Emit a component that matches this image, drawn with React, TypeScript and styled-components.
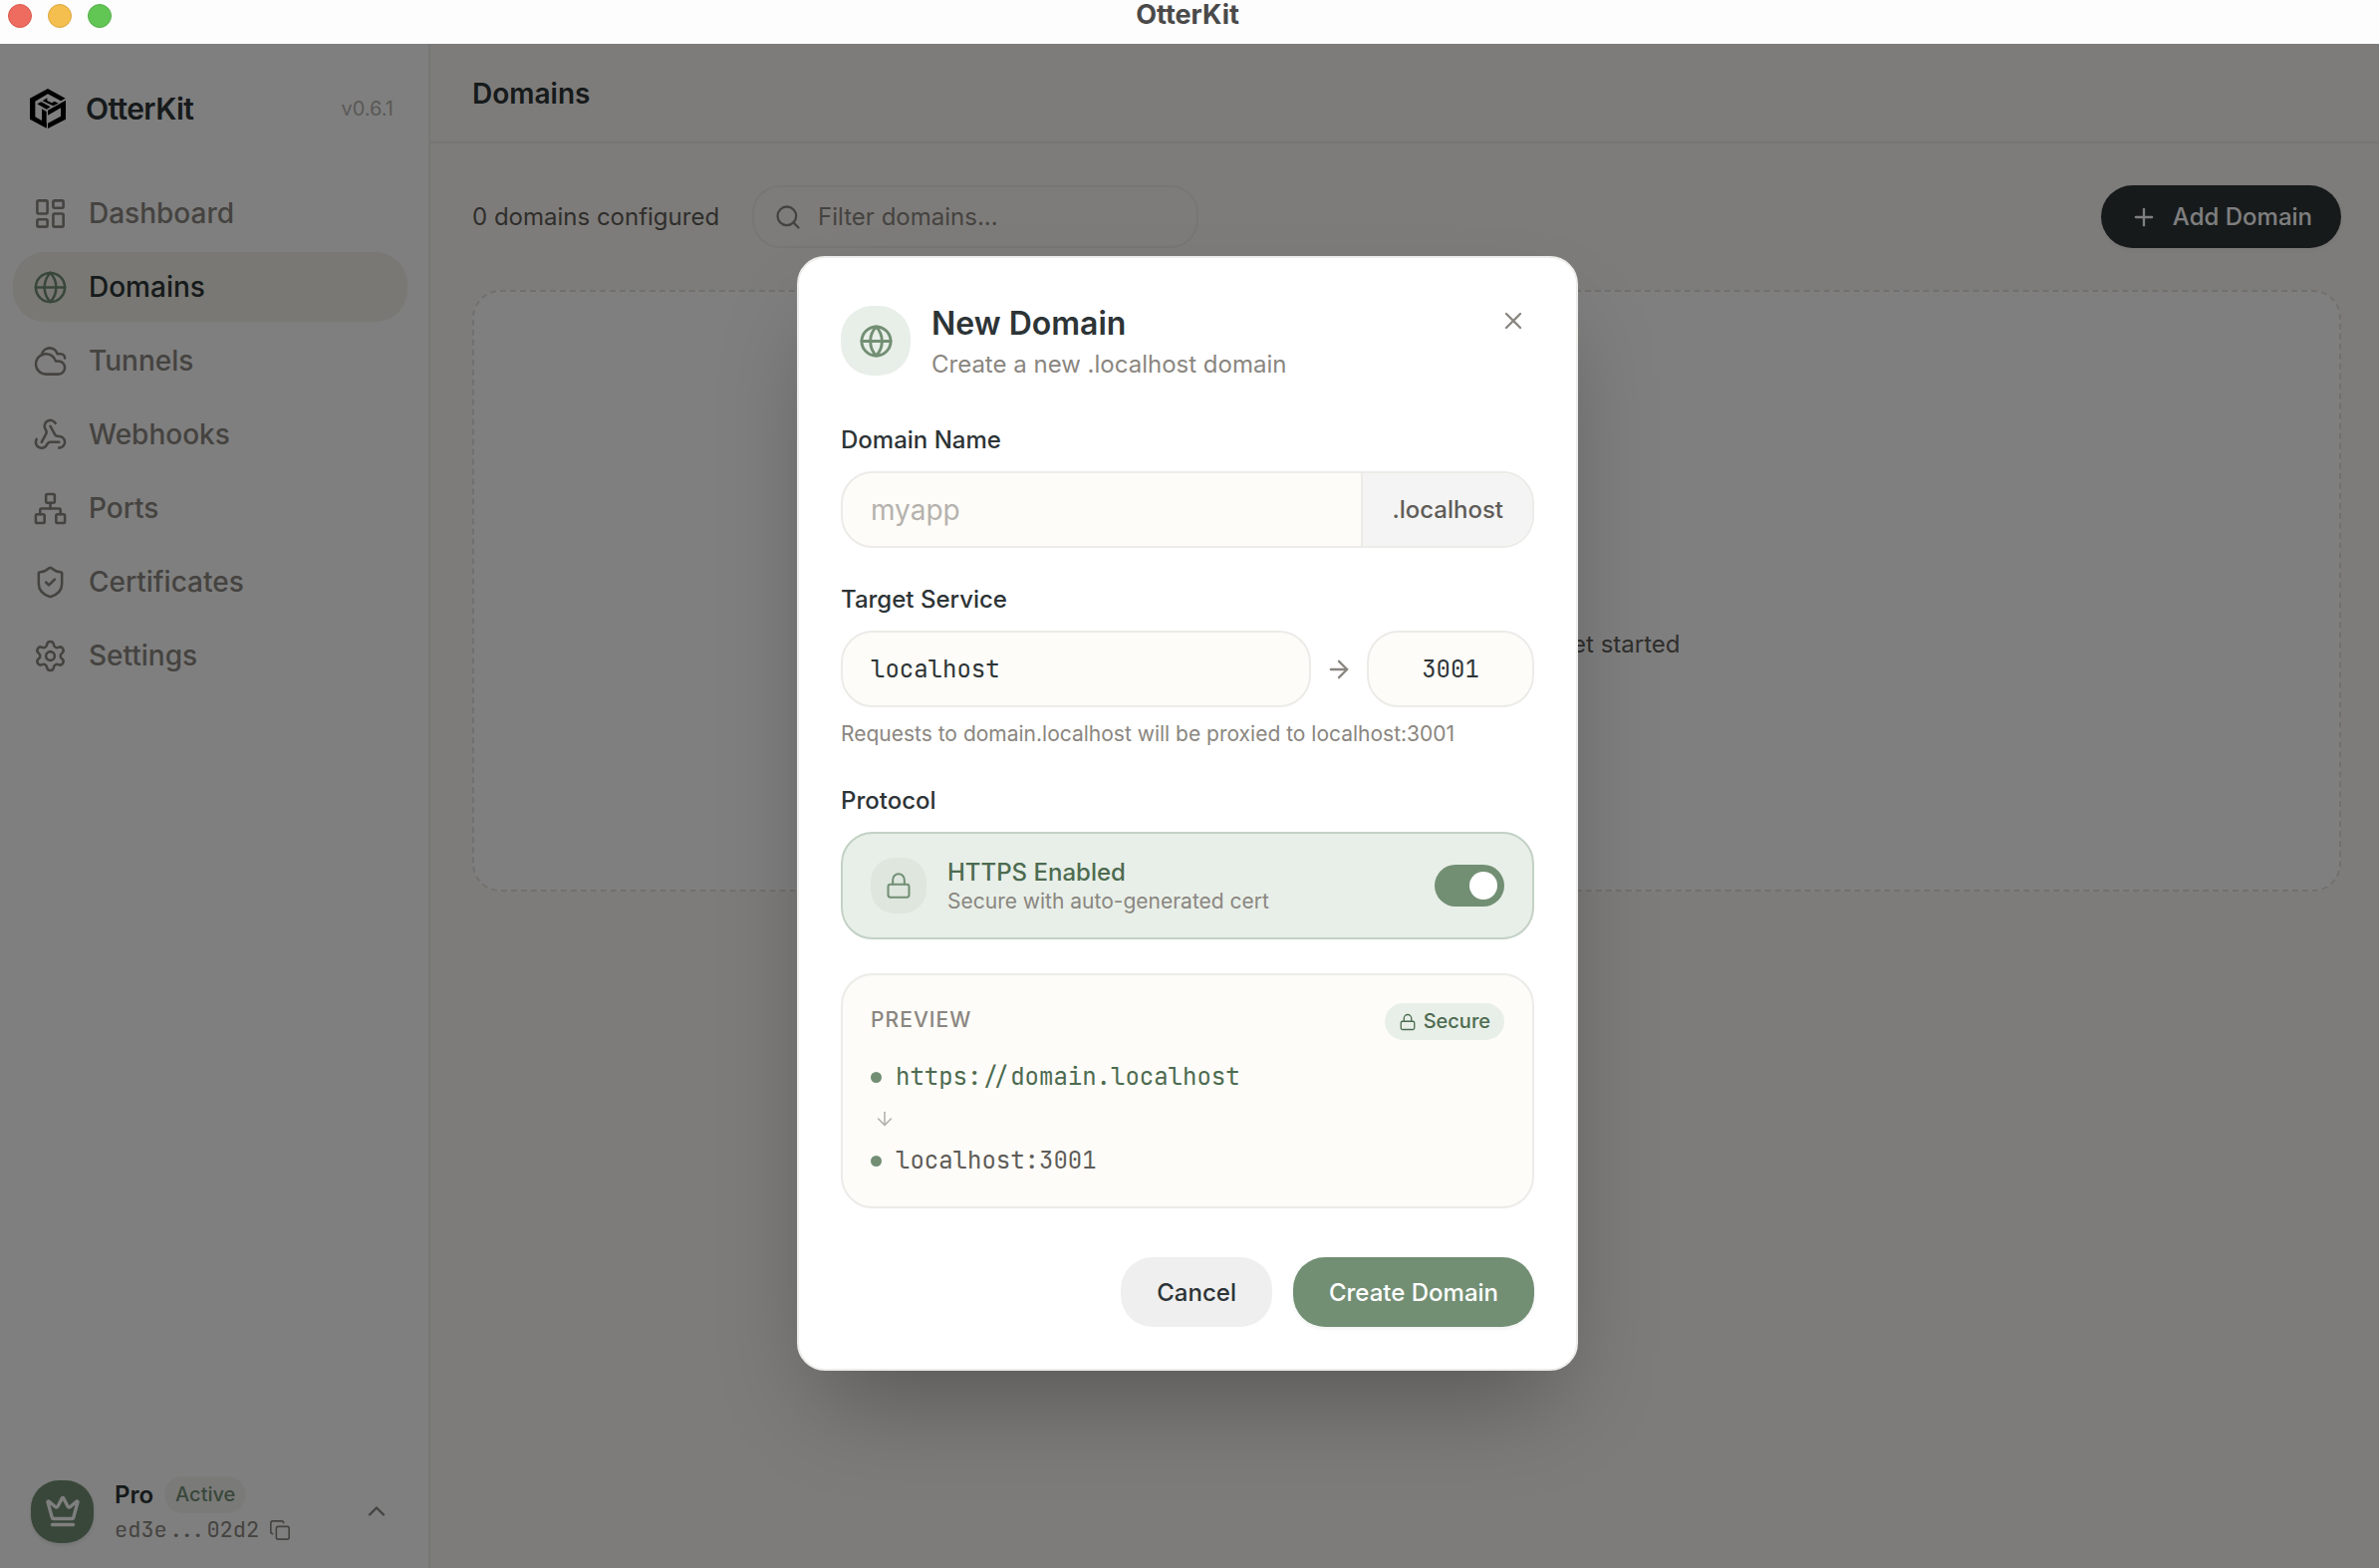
import React, { useState } from "react";
import styled, { createGlobalStyle, css } from "styled-components";
import {
  ArrowDown,
  ArrowRight,
  ChevronUp,
  Cloudy,
  Copy,
  Crown,
  Globe,
  LayoutDashboard,
  Lock,
  Network,
  Plus,
  Search,
  Settings,
  ShieldCheck,
  Webhook,
  X,
} from "lucide-react";

const color = {
  ink: "#2d3436",
  text: "#5f5c58",
  muted: "#8a8680",
  faint: "#b5b2ad",
  sage: "#728f74",
  sageDark: "#4d6b50",
  sageSoft: "#e8efe8",
  sageLine: "#c3d1c5",
  cream: "#fdfcf8",
  canvas: "#fcf9f5",
  line: "#ecebe8",
  white: "#ffffff",
};

const sans = `Inter, "Liberation Sans", sans-serif`;
const mono = `"JetBrains Mono", "DejaVu Sans Mono", monospace`;

const GlobalStyle = createGlobalStyle`
  *, *::before, *::after { box-sizing: border-box; }
  body {
    margin: 0;
    background: ${color.white};
    color: ${color.ink};
    font-family: ${sans};
    font-size: 24px;
    -webkit-font-smoothing: antialiased;
  }
  button, input { font: inherit; color: inherit; }
  button { cursor: pointer; border: 0; background: none; padding: 0; }
  h1, h2, p { margin: 0; }
  svg { display: block; flex: none; }
`;

/* ---------- window frame ---------- */

const Window = styled.div`
  display: flex;
  flex-direction: column;
  min-height: 100vh;
`;

const TitleBar = styled.header`
  display: grid;
  grid-template-columns: 1fr auto 1fr;
  align-items: start;
  padding: 4px 12px 16px 8px;
  background: #fdfdfd;
`;

const Lights = styled.div`
  display: flex;
  gap: 16px;
`;

const Light = styled.button<{ $fill: string; $edge: string }>`
  width: 24px;
  height: 24px;
  border-radius: 50%;
  background: ${(p) => p.$fill};
  border: 1px solid ${(p) => p.$edge};
`;

const WindowTitle = styled.div`
  font-size: 27px;
  line-height: 22px;
  font-weight: 700;
  color: #4a4a4a;
`;

const Body = styled.div`
  position: relative;
  flex: 1;
  display: flex;
`;

/* ---------- sidebar ---------- */

const Sidebar = styled.aside`
  display: flex;
  flex-direction: column;
  width: 432px;
  flex: none;
  border-right: 2px solid #efeeec;
  background: ${color.white};
`;

const Brand = styled.div`
  display: flex;
  align-items: center;
  gap: 20px;
  padding: 45px 35px 50px 30px;
`;

const BrandName = styled.span`
  font-size: 30px;
  line-height: 40px;
  font-weight: 600;
  letter-spacing: -0.02em;
`;

const Version = styled.span`
  margin-left: auto;
  font-size: 20px;
  color: ${color.faint};
`;

const Nav = styled.nav`
  display: flex;
  flex-direction: column;
  gap: 4px;
  padding: 0 21px 0 13px;
`;

const NavLink = styled.a<{ $active?: boolean }>`
  display: flex;
  align-items: center;
  gap: 21px;
  height: 70px;
  padding: 0 20px;
  border-radius: 32px;
  font-size: 28px;
  font-weight: 500;
  text-decoration: none;
  color: ${color.muted};
  ${(p) =>
    p.$active &&
    css`
      background: #f2f0e8;
      color: ${color.ink};
      svg {
        color: ${color.sage};
      }
    `}
`;

const Account = styled.div`
  display: flex;
  align-items: center;
  gap: 21px;
  margin-top: auto;
  padding: 0 38px 22px 31px;
`;

const CrownTile = styled.div`
  display: grid;
  place-items: center;
  width: 63px;
  height: 63px;
  border-radius: 28px;
  background: ${color.sage};
  color: ${color.white};
  box-shadow: 0 2px 4px rgba(0, 0, 0, 0.1);
`;

const AccountInfo = styled.div`
  flex: 1;
`;

const PlanRow = styled.div`
  display: flex;
  align-items: center;
  gap: 11px;
  font-weight: 600;
`;

const ActiveBadge = styled.span`
  padding: 0 11px;
  border-radius: 19px;
  background: #f4f5f3;
  color: ${color.sage};
  font-size: 20px;
  line-height: 37px;
  font-weight: 500;
`;

const KeyRow = styled.div`
  display: flex;
  align-items: center;
  gap: 10px;
  font-family: ${mono};
  font-size: 22px;
  line-height: 33px;
  color: ${color.muted};
`;

const IconButton = styled.button<{ $size: number }>`
  display: grid;
  place-items: center;
  width: ${(p) => p.$size}px;
  height: ${(p) => p.$size}px;
  color: ${color.muted};
`;

/* ---------- main area ---------- */

const Main = styled.main`
  flex: 1;
  min-width: 0;
  background: ${color.canvas};
`;

const PageHeader = styled.div`
  padding: 29px 42px 27px;
  border-bottom: 2px solid #efebe6;
`;

const PageTitle = styled.h1`
  font-size: 28px;
  line-height: 42px;
  font-weight: 600;
`;

const Content = styled.div`
  display: flex;
  flex-direction: column;
  gap: 42px;
  padding: 42px 38px 42px 42px;
`;

const Toolbar = styled.div`
  display: flex;
  align-items: center;
  gap: 33px;
`;

const Count = styled.span`
  color: ${color.text};
`;

const FilterBox = styled.label`
  display: flex;
  align-items: center;
  gap: 16px;
  width: 448px;
  height: 63px;
  padding: 0 20px;
  border: 2px solid #f0ede8;
  border-radius: 28px;
  color: ${color.muted};
`;

const FilterInput = styled.input`
  flex: 1;
  min-width: 0;
  padding: 0;
  border: 0;
  outline: 0;
  background: none;
  &::placeholder {
    color: ${color.muted};
    opacity: 1;
  }
`;

const AddButton = styled.button`
  display: flex;
  align-items: center;
  gap: 15px;
  height: 63px;
  margin-left: auto;
  padding: 0 29px;
  border-radius: 32px;
  background: ${color.ink};
  color: ${color.white};
  font-weight: 500;
  box-shadow: 0 2px 6px rgba(0, 0, 0, 0.05);
`;

const EmptyCard = styled.section`
  display: flex;
  flex-direction: column;
  align-items: center;
  gap: 14px;
  padding: 163px 42px 229px;
  border: 2px dashed #e2e0dd;
  border-radius: 28px;
  background: ${color.white};
  color: ${color.text};
`;

const EmptyIcon = styled.div`
  display: grid;
  place-items: center;
  width: 112px;
  height: 112px;
  border-radius: 32px;
  background: ${color.sageSoft};
  color: ${color.sage};
`;

const EmptyTitle = styled.h2`
  font-size: 28px;
  line-height: 34px;
  font-weight: 600;
  color: ${color.ink};
`;

const EmptyText = styled.p`
  line-height: 34px;
`;

/* ---------- dialog ---------- */

const Overlay = styled.div`
  position: absolute;
  inset: 0;
  display: flex;
  align-items: center;
  justify-content: center;
  padding: 15px 4px 0 0;
  background: rgba(0, 0, 0, 0.5);
`;

const Dialog = styled.form`
  width: 784px;
  max-width: 100%;
  padding: 42px;
  border: 2px solid #ececea;
  border-radius: 28px;
  background: ${color.white};
  box-shadow: 0 50px 100px -24px rgba(0, 0, 0, 0.3);
`;

const DialogHeader = styled.div`
  display: flex;
  align-items: center;
  gap: 21px;
  margin-bottom: 41px;
`;

const HeaderTile = styled.div`
  display: grid;
  place-items: center;
  width: 70px;
  height: 70px;
  border-radius: 32px;
  background: ${color.sageSoft};
  color: ${color.sage};
`;

const HeaderText = styled.div`
  display: grid;
  gap: 2px;
  flex: 1;
  padding-top: 2px;
`;

const DialogTitle = styled.h2`
  font-size: 32px;
  line-height: 44px;
  font-weight: 600;
`;

const DialogSubtitle = styled.p`
  line-height: 34px;
  color: ${color.muted};
`;

const CloseSlot = styled.div`
  align-self: flex-start;
`;

const Field = styled.div`
  margin-bottom: 34px;
`;

const Label = styled.label`
  display: block;
  margin-bottom: 13px;
  line-height: 36px;
  font-weight: 500;
`;

const fieldBox = css`
  height: 77px;
  border: 2px solid ${color.line};
  border-radius: 32px;
  background: ${color.cream};
`;

const SuffixGroup = styled.div`
  ${fieldBox}
  display: flex;
  overflow: hidden;
`;

const NameInput = styled.input`
  flex: 1;
  min-width: 0;
  padding: 0 28px;
  border: 0;
  outline: 0;
  background: none;
  font-size: 28px;
  &::placeholder {
    color: ${color.faint};
    opacity: 1;
  }
`;

const Suffix = styled.span`
  display: flex;
  align-items: center;
  padding: 0 29px;
  border-left: 2px solid ${color.line};
  background: #f4f4f4;
  color: ${color.text};
  font-weight: 500;
`;

const TargetRow = styled.div`
  display: flex;
  align-items: center;
  gap: 14px;
  color: ${color.muted};
`;

const MonoInput = styled.input<{ $port?: boolean }>`
  ${fieldBox}
  flex: ${(p) => (p.$port ? "none" : "1")};
  width: ${(p) => (p.$port ? "168px" : "auto")};
  min-width: 0;
  padding: 0 28px;
  outline: 0;
  font-family: ${mono};
  color: ${color.ink};
  text-align: ${(p) => (p.$port ? "center" : "left")};
`;

const Hint = styled.p`
  margin-top: 12px;
  font-size: 21px;
  line-height: 30px;
  color: ${color.muted};
`;

const ProtocolCard = styled.div`
  display: flex;
  align-items: center;
  gap: 21px;
  padding: 22px 28px;
  border: 2px solid ${color.sageLine};
  border-radius: 32px;
  background: ${color.sageSoft};
`;

const LockTile = styled.div`
  display: grid;
  place-items: center;
  width: 56px;
  height: 56px;
  border-radius: 24px;
  background: #dee6de;
  color: ${color.sage};
`;

const ProtocolText = styled.div`
  flex: 1;
  padding-top: 2px;
`;

const ProtocolTitle = styled.div`
  line-height: 30px;
  font-weight: 500;
  color: ${color.sageDark};
`;

const ProtocolNote = styled.div`
  font-size: 21px;
  line-height: 28px;
  color: ${color.muted};
`;

const Switch = styled.input`
  appearance: none;
  width: 70px;
  height: 42px;
  margin: 0;
  padding: 7px;
  border-radius: 21px;
  background: #d5d3cf;
  cursor: pointer;
  &::before {
    content: "";
    display: block;
    width: 28px;
    height: 28px;
    border-radius: 50%;
    background: ${color.white};
  }
  &:checked {
    background: ${color.sage};
  }
  &:checked::before {
    margin-left: auto;
  }
`;

const Preview = styled.div`
  padding: 28px;
  border: 2px solid ${color.line};
  border-radius: 32px;
  background: ${color.cream};
`;

const PreviewHeader = styled.div`
  display: flex;
  justify-content: space-between;
  align-items: flex-start;
  margin-bottom: 19px;
`;

const PreviewLabel = styled.span`
  font-size: 21px;
  line-height: 34px;
  font-weight: 500;
  letter-spacing: 0.05em;
  color: ${color.muted};
`;

const SecureBadge = styled.span`
  display: flex;
  align-items: center;
  gap: 7px;
  padding: 0 14px;
  border-radius: 19px;
  background: ${color.sageSoft};
  color: ${color.sageDark};
  font-size: 20px;
  line-height: 37px;
  font-weight: 500;
`;

const Route = styled.div`
  display: flex;
  flex-direction: column;
  gap: 13px;
`;

const RouteLine = styled.div<{ $primary?: boolean }>`
  display: flex;
  align-items: center;
  gap: 14px;
  line-height: 36px;
  font-family: ${mono};
  color: ${(p) => (p.$primary ? color.sageDark : color.text)};
  &::before {
    content: "";
    width: 11px;
    height: 11px;
    border-radius: 50%;
    background: ${color.sage};
  }
`;

const RouteArrow = styled.div`
  padding-left: 3px;
  color: ${color.faint};
`;

const Actions = styled.div`
  display: flex;
  justify-content: flex-end;
  gap: 21px;
  margin-top: 49px;
`;

const ActionButton = styled.button<{ $primary?: boolean }>`
  height: 70px;
  padding: 0 36px;
  border-radius: 32px;
  font-weight: 500;
  background: ${(p) => (p.$primary ? color.sage : "#efefef")};
  color: ${(p) => (p.$primary ? color.white : color.ink)};
  box-shadow: ${(p) => (p.$primary ? "0 2px 4px rgba(0, 0, 0, 0.06)" : "none")};
`;

const Logo = () => (
  <svg width="36" height="40" viewBox="0 0 108 120" fill="#000" aria-hidden="true">
    <path d="M54 0 107 29 93 37 54 16 16 38V85L50 104V119L0 92V29Z" />
    <path d="M108 35V92L54 120V104L93 83V58L54 80V65Z" />
    <path d="M36 61 50 69V116L36 107Z" />
    <path d="M22 46 34 40 62 55 50 62Z" />
    <path d="M38 37 52 28 52 36 66 43 74 38 86 44 70 52Z" />
  </svg>
);

const navItems = [
  { label: "Dashboard", icon: LayoutDashboard },
  { label: "Domains", icon: Globe },
  { label: "Tunnels", icon: Cloudy },
  { label: "Webhooks", icon: Webhook },
  { label: "Ports", icon: Network },
  { label: "Certificates", icon: ShieldCheck },
  { label: "Settings", icon: Settings },
];

export default function App() {
  const [name, setName] = useState("");
  const [host, setHost] = useState("localhost");
  const [port, setPort] = useState("3001");
  const [https, setHttps] = useState(true);
  const domain = name || "domain";

  return (
    <Window>
      <GlobalStyle />
      <TitleBar>
        <Lights>
          <Light $fill="#ed6b5f" $edge="#d95a4e" aria-label="Close window" />
          <Light $fill="#f5bf4f" $edge="#dba840" aria-label="Minimize window" />
          <Light $fill="#62c655" $edge="#52ad46" aria-label="Zoom window" />
        </Lights>
        <WindowTitle>OtterKit</WindowTitle>
      </TitleBar>

      <Body>
        <Sidebar>
          <Brand>
            <Logo />
            <BrandName>OtterKit</BrandName>
            <Version>v0.6.1</Version>
          </Brand>
          <Nav>
            {navItems.map(({ label, icon: Icon }) => (
              <NavLink key={label} href="#" $active={label === "Domains"}>
                <Icon size={35} strokeWidth={1.75} />
                {label}
              </NavLink>
            ))}
          </Nav>
          <Account>
            <CrownTile>
              <Crown size={36} strokeWidth={2.25} />
            </CrownTile>
            <AccountInfo>
              <PlanRow>
                Pro <ActiveBadge>Active</ActiveBadge>
              </PlanRow>
              <KeyRow>
                ed3e...02d2
                <IconButton type="button" $size={22} aria-label="Copy license key">
                  <Copy size={22} strokeWidth={1.75} />
                </IconButton>
              </KeyRow>
            </AccountInfo>
            <IconButton type="button" $size={28} aria-label="Account menu">
              <ChevronUp size={28} strokeWidth={2} />
            </IconButton>
          </Account>
        </Sidebar>

        <Main>
          <PageHeader>
            <PageTitle>Domains</PageTitle>
          </PageHeader>
          <Content>
            <Toolbar>
              <Count>0 domains configured</Count>
              <FilterBox>
                <Search size={28} strokeWidth={2} />
                <FilterInput placeholder="Filter domains..." aria-label="Filter domains" />
              </FilterBox>
              <AddButton type="button">
                <Plus size={28} strokeWidth={2} />
                Add Domain
              </AddButton>
            </Toolbar>
            <EmptyCard>
              <EmptyIcon>
                <Globe size={56} strokeWidth={1.5} />
              </EmptyIcon>
              <EmptyTitle>No domains yet</EmptyTitle>
              <EmptyText>Create your first .localhost domain to get started</EmptyText>
            </EmptyCard>
          </Content>
        </Main>

        <Overlay>
          <Dialog
            role="dialog"
            aria-modal="true"
            aria-labelledby="dialog-title"
            onSubmit={(event) => event.preventDefault()}
          >
            <DialogHeader>
              <HeaderTile>
                <Globe size={35} strokeWidth={2} />
              </HeaderTile>
              <HeaderText>
                <DialogTitle id="dialog-title">New Domain</DialogTitle>
                <DialogSubtitle>Create a new .localhost domain</DialogSubtitle>
              </HeaderText>
              <CloseSlot>
                <IconButton type="button" $size={42} aria-label="Close">
                  <X size={28} strokeWidth={2} />
                </IconButton>
              </CloseSlot>
            </DialogHeader>

            <Field>
              <Label htmlFor="domain-name">Domain Name</Label>
              <SuffixGroup>
                <NameInput
                  id="domain-name"
                  placeholder="myapp"
                  value={name}
                  onChange={(event) => setName(event.target.value)}
                />
                <Suffix>.localhost</Suffix>
              </SuffixGroup>
            </Field>

            <Field>
              <Label htmlFor="target-host">Target Service</Label>
              <TargetRow>
                <MonoInput
                  id="target-host"
                  value={host}
                  onChange={(event) => setHost(event.target.value)}
                />
                <ArrowRight size={28} strokeWidth={2} />
                <MonoInput
                  $port
                  aria-label="Target port"
                  value={port}
                  onChange={(event) => setPort(event.target.value)}
                />
              </TargetRow>
              <Hint>
                Requests to {domain}.localhost will be proxied to {host}:{port}
              </Hint>
            </Field>

            <Field>
              <Label htmlFor="https-switch">Protocol</Label>
              <ProtocolCard>
                <LockTile>
                  <Lock size={28} strokeWidth={1.75} />
                </LockTile>
                <ProtocolText>
                  <ProtocolTitle>HTTPS Enabled</ProtocolTitle>
                  <ProtocolNote>Secure with auto-generated cert</ProtocolNote>
                </ProtocolText>
                <Switch
                  id="https-switch"
                  type="checkbox"
                  role="switch"
                  checked={https}
                  onChange={(event) => setHttps(event.target.checked)}
                />
              </ProtocolCard>
            </Field>

            <Preview>
              <PreviewHeader>
                <PreviewLabel>PREVIEW</PreviewLabel>
                {https && (
                  <SecureBadge>
                    <Lock size={18} strokeWidth={1.75} />
                    Secure
                  </SecureBadge>
                )}
              </PreviewHeader>
              <Route>
                <RouteLine $primary>
                  {https ? "https" : "http"}://{domain}.localhost
                </RouteLine>
                <RouteArrow>
                  <ArrowDown size={22} strokeWidth={1.75} />
                </RouteArrow>
                <RouteLine>
                  {host}:{port}
                </RouteLine>
              </Route>
            </Preview>

            <Actions>
              <ActionButton type="button">Cancel</ActionButton>
              <ActionButton type="submit" $primary>
                Create Domain
              </ActionButton>
            </Actions>
          </Dialog>
        </Overlay>
      </Body>
    </Window>
  );
}
